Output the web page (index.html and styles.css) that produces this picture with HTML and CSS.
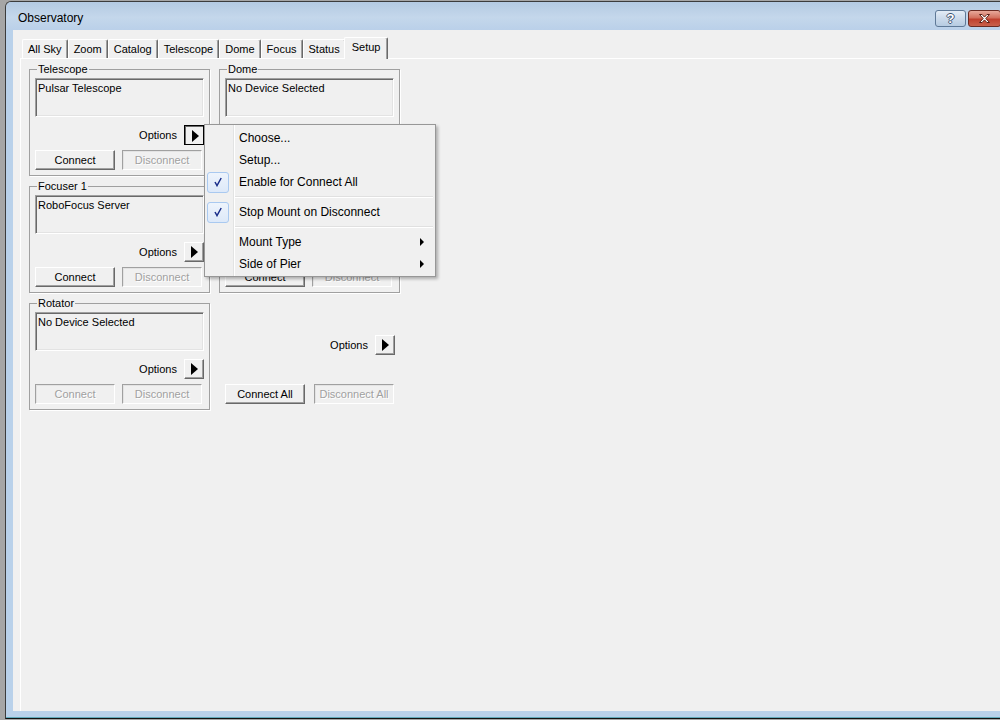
FILE: index.html
```html
<!DOCTYPE html>
<html lang="en">
<head>
  <meta charset="UTF-8" />
  <title>Observatory</title>
  <link rel="stylesheet" href="styles.css">
</head>
<body>
  <div class="window">
    <div class="titlebar">
      <span class="title">Observatory</span>
      <div class="caption-buttons">
        <button class="cap help">?</button>
        <button class="cap close">
          <svg width="13" height="11" viewBox="0 0 13 11"><path d="M1.5 1.5h2.6l2.4 2.6 2.4-2.6h2.6l-3.7 4 3.7 4H8.9L6.5 6.9 4.1 9.5H1.5l3.7-4z" fill="#fff" stroke="#5a2018" stroke-width="1"/></svg>
        </button>
      </div>
    </div>

    <div class="frame">
      <div class="client">
        <div class="tabs">
          <div class="tab">All Sky</div>
          <div class="tab">Zoom</div>
          <div class="tab">Catalog</div>
          <div class="tab">Telescope</div>
          <div class="tab">Dome</div>
          <div class="tab">Focus</div>
          <div class="tab">Status</div>
          <div class="tab active">Setup</div>
        </div>

        <div class="tab-page">
          <div class="setup-grid">
            <fieldset class="group">
              <legend>Telescope</legend>
              <div class="device-box">Pulsar Telescope</div>
              <div class="options-row">
                <span>Options</span>
                <div class="menu-anchor">
                  <button class="arrow-btn pressed"></button>

                  <!-- options popup for the telescope -->
                  <div class="popup-menu">
                    <div class="menu-item"><span class="mark"></span>Choose...</div>
                    <div class="menu-item"><span class="mark"></span>Setup...</div>
                    <div class="menu-item">
                      <span class="mark checked"><svg width="8" height="10" viewBox="0 0 8 10"><path d="M1 5 L3 8.6 L7.2 1" fill="none" stroke="#1b2f8a" stroke-width="1.5"/></svg></span>Enable for Connect All
                    </div>
                    <div class="menu-sep"></div>
                    <div class="menu-item">
                      <span class="mark checked"><svg width="8" height="10" viewBox="0 0 8 10"><path d="M1 5 L3 8.6 L7.2 1" fill="none" stroke="#1b2f8a" stroke-width="1.5"/></svg></span>Stop Mount on Disconnect
                    </div>
                    <div class="menu-sep"></div>
                    <div class="menu-item"><span class="mark"></span>Mount Type<span class="sub-arrow"></span></div>
                    <div class="menu-item"><span class="mark"></span>Side of Pier<span class="sub-arrow"></span></div>
                  </div>
                </div>
              </div>
              <div class="connect-row">
                <button class="btn">Connect</button>
                <button class="btn" disabled>Disconnect</button>
              </div>
            </fieldset>

            <fieldset class="group dome">
              <legend>Dome</legend>
              <div class="device-box">No Device Selected</div>
              <div class="options-row">
                <span>Options</span>
                <button class="arrow-btn"></button>
              </div>
              <div class="connect-row">
                <button class="btn">Connect</button>
                <button class="btn" disabled>Disconnect</button>
              </div>
            </fieldset>

            <fieldset class="group">
              <legend>Focuser 1</legend>
              <div class="device-box">RoboFocus Server</div>
              <div class="options-row">
                <span>Options</span>
                <button class="arrow-btn"></button>
              </div>
              <div class="connect-row">
                <button class="btn">Connect</button>
                <button class="btn" disabled>Disconnect</button>
              </div>
            </fieldset>

            <fieldset class="group">
              <legend>Rotator</legend>
              <div class="device-box">No Device Selected</div>
              <div class="options-row">
                <span>Options</span>
                <button class="arrow-btn"></button>
              </div>
              <div class="connect-row">
                <button class="btn" disabled>Connect</button>
                <button class="btn" disabled>Disconnect</button>
              </div>
            </fieldset>

            <div class="all-controls">
              <div class="options-row">
                <span>Options</span>
                <button class="arrow-btn"></button>
              </div>
              <div class="connect-row wide">
                <button class="btn">Connect All</button>
                <button class="btn" disabled>Disconnect All</button>
              </div>
            </div>
          </div>
        </div>
      </div>
    </div>
  </div>
</body>
</html>
```

FILE: styles.css
```css
* {
  box-sizing: border-box;
}

body {
  margin: 0;
  height: 720px;
  overflow: hidden;
  background: #a6a6a6;
  font-family: 'Liberation Sans', Arial, sans-serif;
  font-size: 11px;
  color: #000;
}

button {
  font-family: inherit;
  font-size: 11px;
  color: #000;
  padding: 0;
  background: #f0f0f0;
}

/* window frame */
.window {
  margin: 1px -5px 0 5px;
  border-top: 1px solid #3c3c3c;
  border-left: 1px solid #3c3c3c;
  border-bottom: 1px solid #111;
  border-top-left-radius: 6px;
  overflow: hidden;
}

.titlebar {
  height: 28px;
  display: flex;
  align-items: flex-start;
  background: linear-gradient(#b4cae2, #c4d7eb 55%, #bad0e9);
}

.title {
  font-size: 12px;
  line-height: 15px;
  padding: 9px 0 0 12px;
}

.caption-buttons {
  margin-left: auto;
  margin-right: 4px;
  margin-top: 8px;
  display: flex;
  gap: 2px;
}

.cap {
  height: 17px;
  border: 1px solid #5f7997;
  border-radius: 3px;
  display: flex;
  align-items: center;
  justify-content: center;
}

.help {
  width: 31px;
  background: linear-gradient(#e3ecf6, #cbdaeb 50%, #b6cbe1);
  color: #fff;
  font-size: 13px;
  font-weight: bold;
  text-shadow: -1px 0 #3f5573, 1px 0 #3f5573, 0 -1px #3f5573, 0 1px #3f5573;
}

.close {
  width: 33px;
  border-color: #6a2a22;
  background: linear-gradient(#e8a99b, #d2715f 45%, #c0402e 55%, #c9614c);
}

.frame {
  background: #b9d1ea;
  padding: 0 0 7px 7px;
  box-shadow: inset 0 -1px 0 #62aabb;
}

.client {
  height: 681px;
  background: #f0f0f0;
  padding: 7px 0 0 7px;
  display: flex;
  flex-direction: column;
}

/* tabs */
.tabs {
  display: flex;
  align-items: flex-end;
  height: 21px;
  padding-left: 2px;
}

.tab {
  height: 19px;
  line-height: 17px;
  padding: 1px 5px 0;
  border-top: 1px solid #fff;
  border-left: 1px solid #fff;
  border-right: 1px solid #696969;
  border-radius: 2px 2px 0 0;
  box-shadow: inset -1px 0 0 #a0a0a0;
  white-space: nowrap;
}

.tab.active {
  position: relative;
  z-index: 1;
  height: 22px;
  line-height: 18px;
  margin: 0 -2px -1px;
  padding: 0 7px;
  background: #f0f0f0;
}

.tab-page {
  flex: 1;
  border-top: 1px solid #fff;
  border-left: 1px solid #fff;
  padding: 4px 0 0 8px;
}

.setup-grid {
  display: grid;
  grid-template-columns: 181px 181px;
  column-gap: 9px;
  row-gap: 4px;
  width: max-content;
}

/* group boxes */
.group {
  margin: 0;
  min-width: 0;
  padding: 2px 5px 5px;
  border: 1px solid #a0a0a0;
  box-shadow: 1px 1px 0 #fff;
  display: flex;
  flex-direction: column;
}

.group legend {
  padding: 0 1px;
  margin-left: 2px;
  line-height: 13px;
}

.group.dome {
  grid-row: span 2;
}

.group.dome .connect-row {
  margin-top: auto;
}

.device-box {
  height: 39px;
  padding: 3px 2px 0;
  border: 1px solid;
  border-color: #a0a0a0 #fff #fff #a0a0a0;
  box-shadow: inset 1px 1px 0 #696969, inset -1px -1px 0 #e3e3e3;
  white-space: nowrap;
}

.options-row {
  display: flex;
  justify-content: flex-end;
  align-items: center;
  gap: 7px;
  height: 20px;
  margin-top: 8px;
}

.menu-anchor {
  position: relative;
  height: 20px;
}

.arrow-btn {
  width: 20px;
  height: 20px;
  border: 1px solid;
  border-color: #fff #696969 #696969 #fff;
  box-shadow: inset -1px -1px 0 #a0a0a0;
  display: flex;
  align-items: center;
  justify-content: center;
}

.arrow-btn::before {
  content: "";
  margin-left: 1px;
  border-left: 7px solid #000;
  border-top: 6px solid transparent;
  border-bottom: 6px solid transparent;
}

.arrow-btn.pressed {
  border-color: #000;
  box-shadow: inset 1px 1px 0 #696969;
}

.arrow-btn.pressed::before {
  margin: 1px 0 0 2px;
}

.connect-row {
  display: flex;
  gap: 7px;
  margin-top: 5px;
}

.btn {
  width: 80px;
  height: 20px;
  border: 1px solid;
  border-color: #fff #696969 #696969 #fff;
  box-shadow: inset -1px -1px 0 #a0a0a0;
}

.btn:disabled {
  color: #a0a0a0;
  text-shadow: 1px 1px 0 #fff;
  border-color: #a0a0a0 #fff #fff #a0a0a0;
  box-shadow: inset 1px 1px 0 #e3e3e3;
}

.all-controls {
  display: flex;
  flex-direction: column;
  justify-content: flex-end;
  padding: 0 5px 6px 6px;
}

.all-controls .options-row {
  margin-top: 0;
}

.connect-row.wide {
  gap: 9px;
  margin-top: 29px;
}

/* popup menu */
.popup-menu {
  position: absolute;
  left: 100%;
  top: -1px;
  z-index: 10;
  width: 232px;
  padding: 2px 2px 1px;
  border: 1px solid #979797;
  background: linear-gradient(to right, #f0f0f0 28px, #e2e3e3 28px, #e2e3e3 29px, #fff 29px, #fff 30px, #f0f0f0 30px);
  box-shadow: 2px 2px 3px rgba(0, 0, 0, 0.28);
  font-size: 12px;
  white-space: nowrap;
}

.menu-item {
  height: 22px;
  display: flex;
  align-items: center;
}

.mark {
  width: 22px;
  height: 21px;
  margin-right: 10px;
  display: flex;
  align-items: center;
  justify-content: center;
}

.mark.checked {
  border: 1px solid #a9c9f0;
  border-radius: 3px;
  background: linear-gradient(#eef4fc, #dde9f9);
}

.sub-arrow {
  margin-left: auto;
  margin-right: 9px;
  border-left: 4px solid #000;
  border-top: 4px solid transparent;
  border-bottom: 4px solid transparent;
}

.menu-sep {
  height: 8px;
  margin-left: 28px;
  background:
    linear-gradient(#e0e0e0, #e0e0e0) 0 3px / 100% 1px no-repeat,
    linear-gradient(#fff, #fff) 0 4px / 100% 1px no-repeat;
}
```
